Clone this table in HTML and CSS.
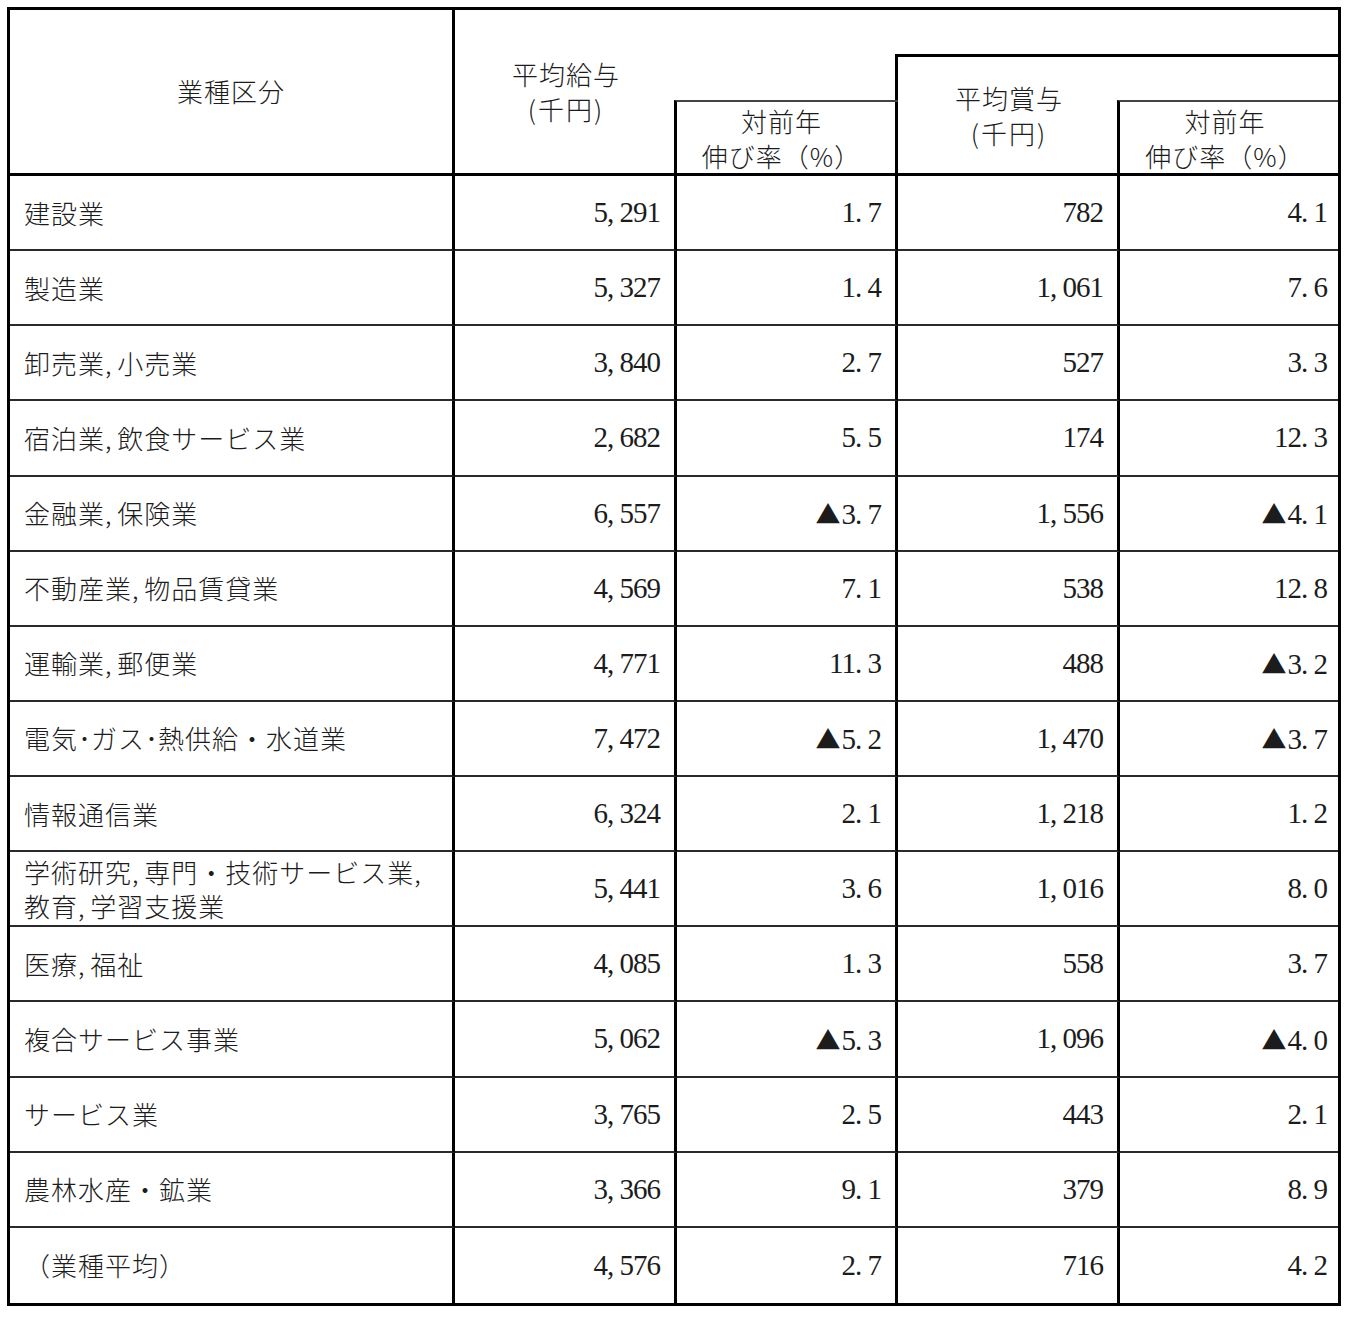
FILE: index.html
```html
<!DOCTYPE html>
<html lang="ja">
<head>
<meta charset="utf-8">
<title>業種別 平均給与・平均賞与</title>
<link rel="stylesheet" href="styles.css">
</head>
<body>
<div class="sheet">
  <div class="h h-kind">業種区分</div>
  <div class="h h-pay"><span>平均給与</span><span class="paren">(千円)</span></div>
  <div class="h h-blankA"></div>
  <div class="h h-blankB"></div>
  <div class="h h-bonus"><span>平均賞与</span><span class="paren">(千円)</span></div>
  <div class="h h-topright"></div>
  <div class="h h-rateA"><span>対前年</span><span>伸び率（%）</span></div>
  <div class="h h-rateB"><span>対前年</span><span>伸び率（%）</span></div>

  <div class="row"><div class="c label"><span>建設業</span></div><div class="c num"><span>5, 291</span></div><div class="c num"><span>1. 7</span></div><div class="c num"><span>782</span></div><div class="c num"><span>4. 1</span></div></div>
  <div class="row"><div class="c label"><span>製造業</span></div><div class="c num"><span>5, 327</span></div><div class="c num"><span>1. 4</span></div><div class="c num"><span>1, 061</span></div><div class="c num"><span>7. 6</span></div></div>
  <div class="row"><div class="c label"><span>卸売業<span class="cm">, </span>小売業</span></div><div class="c num"><span>3, 840</span></div><div class="c num"><span>2. 7</span></div><div class="c num"><span>527</span></div><div class="c num"><span>3. 3</span></div></div>
  <div class="row"><div class="c label"><span>宿泊業<span class="cm">, </span>飲食サービス業</span></div><div class="c num"><span>2, 682</span></div><div class="c num"><span>5. 5</span></div><div class="c num"><span>174</span></div><div class="c num"><span>12. 3</span></div></div>
  <div class="row"><div class="c label"><span>金融業<span class="cm">, </span>保険業</span></div><div class="c num"><span>6, 557</span></div><div class="c num"><span><span class="tri">▲</span>3. 7</span></div><div class="c num"><span>1, 556</span></div><div class="c num"><span><span class="tri">▲</span>4. 1</span></div></div>
  <div class="row"><div class="c label"><span>不動産業<span class="cm">, </span>物品賃貸業</span></div><div class="c num"><span>4, 569</span></div><div class="c num"><span>7. 1</span></div><div class="c num"><span>538</span></div><div class="c num"><span>12. 8</span></div></div>
  <div class="row"><div class="c label"><span>運輸業<span class="cm">, </span>郵便業</span></div><div class="c num"><span>4, 771</span></div><div class="c num"><span>11. 3</span></div><div class="c num"><span>488</span></div><div class="c num"><span><span class="tri">▲</span>3. 2</span></div></div>
  <div class="row"><div class="c label"><span>電気<span class="dot">･</span>ガス<span class="dot">･</span>熱供給・水道業</span></div><div class="c num"><span>7, 472</span></div><div class="c num"><span><span class="tri">▲</span>5. 2</span></div><div class="c num"><span>1, 470</span></div><div class="c num"><span><span class="tri">▲</span>3. 7</span></div></div>
  <div class="row"><div class="c label"><span>情報通信業</span></div><div class="c num"><span>6, 324</span></div><div class="c num"><span>2. 1</span></div><div class="c num"><span>1, 218</span></div><div class="c num"><span>1. 2</span></div></div>
  <div class="row"><div class="c label two"><span>学術研究<span class="cm">, </span>専門・技術サービス業<span class="cm">,</span><br>教育<span class="cm">, </span>学習支援業</span></div><div class="c num"><span>5, 441</span></div><div class="c num"><span>3. 6</span></div><div class="c num"><span>1, 016</span></div><div class="c num"><span>8. 0</span></div></div>
  <div class="row"><div class="c label"><span>医療<span class="cm">, </span>福祉</span></div><div class="c num"><span>4, 085</span></div><div class="c num"><span>1. 3</span></div><div class="c num"><span>558</span></div><div class="c num"><span>3. 7</span></div></div>
  <div class="row"><div class="c label"><span>複合サービス事業</span></div><div class="c num"><span>5, 062</span></div><div class="c num"><span><span class="tri">▲</span>5. 3</span></div><div class="c num"><span>1, 096</span></div><div class="c num"><span><span class="tri">▲</span>4. 0</span></div></div>
  <div class="row"><div class="c label"><span>サービス業</span></div><div class="c num"><span>3, 765</span></div><div class="c num"><span>2. 5</span></div><div class="c num"><span>443</span></div><div class="c num"><span>2. 1</span></div></div>
  <div class="row"><div class="c label"><span>農林水産・鉱業</span></div><div class="c num"><span>3, 366</span></div><div class="c num"><span>9. 1</span></div><div class="c num"><span>379</span></div><div class="c num"><span>8. 9</span></div></div>
  <div class="row last"><div class="c label"><span>（業種平均）</span></div><div class="c num"><span>4, 576</span></div><div class="c num"><span>2. 7</span></div><div class="c num"><span>716</span></div><div class="c num"><span>4. 2</span></div></div>
</div>
</body>
</html>
```
FILE: styles.css
```css
html, body {
  margin: 0;
  padding: 0;
  background: #ffffff;
}

body {
  font-family: "Noto Sans CJK JP", "Noto Sans CJK SC", sans-serif;
  color: #1c1c1c;
}

.sheet {
  box-sizing: border-box;
  margin: 7px 0 0 7px;
  width: 1334px;
  border: 3px solid #000;
  display: grid;
  grid-template-columns: 445px 222px 221px 222px 218px;
  grid-template-rows: 44px 46px 76px repeat(15, 75.13px);
}

/* ---------- header ---------- */
.h {
  box-sizing: border-box;
  display: flex;
  flex-direction: column;
  align-items: center;
  justify-content: center;
  font-size: 26px;
  font-weight: 300;
  letter-spacing: 1px;
  line-height: 35px;
}

.h .paren {
  letter-spacing: 2px;
}

.h-kind {
  grid-column: 1;
  grid-row: 1 / 4;
  border-right: 3px solid #000;
  border-bottom: 3px solid #000;
  padding-bottom: 2px;
}

.h-pay {
  grid-column: 2;
  grid-row: 1 / 4;
  border-bottom: 3px solid #000;
  padding-bottom: 2px;
}

.h-blankA {
  grid-column: 3;
  grid-row: 1 / 3;
}

.h-blankB {
  grid-column: 4 / 6;
  grid-row: 1;
}

.h-rateA {
  grid-column: 3;
  grid-row: 3;
  margin-left: -3px;
  border-left: 3px solid #000;
  border-top: 2px solid #444;
  border-bottom: 3px solid #000;
  padding-right: 12px;
}

.h-bonus {
  grid-column: 4;
  grid-row: 2 / 4;
  margin-left: -3px;
  border-left: 3px solid #000;
  border-top: 3px solid #000;
  border-bottom: 3px solid #000;
}

.h-topright {
  grid-column: 5;
  grid-row: 2;
  border-top: 3px solid #000;
}

.h-rateB {
  grid-column: 5;
  grid-row: 3;
  margin-left: -3px;
  border-left: 3px solid #000;
  border-top: 2px solid #444;
  border-bottom: 3px solid #000;
  padding-right: 8px;
}

/* ---------- body ---------- */
.row {
  display: contents;
}

.c {
  box-sizing: border-box;
  display: flex;
  align-items: center;
  border-right: 3px solid #000;
  border-bottom: 2px solid #2a2a2a;
}

.c:last-child {
  border-right: none;
}

.row.last .c {
  border-bottom: none;
}

.label {
  padding-left: 14px;
  font-size: 26px;
  font-weight: 300;
  letter-spacing: 1px;
  line-height: 34px;
  white-space: nowrap;
}

.label .cm,
.label .dot {
  letter-spacing: 0;
}

.num {
  justify-content: flex-end;
  padding-right: 14px;
  font-family: "Liberation Serif", "DejaVu Serif", serif;
  font-size: 29px;
  letter-spacing: -1px;
  white-space: nowrap;
}

.num:last-child {
  padding-right: 11px;
}

.num .tri {
  font-family: "Noto Sans CJK JP", sans-serif;
  font-size: 25px;
  letter-spacing: 1px;
}
```
